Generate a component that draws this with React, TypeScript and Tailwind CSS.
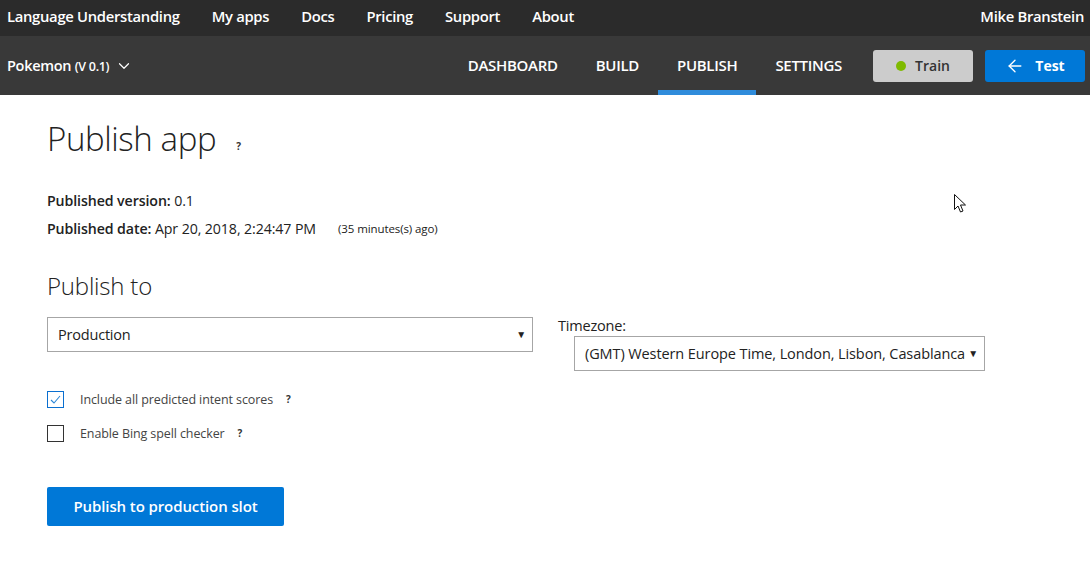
import { ArrowLeft, ChevronDown } from "lucide-react";

const font = { fontFamily: '"Open Sans", "Noto Sans", sans-serif' };

const topLinks = ["My apps", "Docs", "Pricing", "Support", "About"];
const tabs = ["DASHBOARD", "BUILD", "PUBLISH", "SETTINGS"];

const Help = () => (
  <span className="text-[10px] font-bold text-[#333]">?</span>
);

export default function App() {
  return (
    <div
      className="relative w-[1090px] h-[576px] overflow-hidden bg-white"
      style={font}
    >
      {/* Top bar */}
      <header className="h-[36px] bg-[#2b2b2b] flex items-center justify-between pl-[7px] pr-[6px] pb-[4px] text-white text-[14.8px] font-semibold tracking-[-0.3px]">
        <nav className="flex items-center gap-[32px]">
          <span>Language Understanding</span>
          {topLinks.map((l) => (
            <span key={l}>{l}</span>
          ))}
        </nav>
        <span>Mike Branstein</span>
      </header>

      {/* App bar */}
      <div className="h-[59px] bg-[#393939] flex items-stretch justify-between pl-[7px] pr-[5px] text-white">
        <div className="flex items-center gap-[6px] text-[14.5px] font-semibold tracking-[-0.3px]">
          <span>
            Pokemon <span className="text-[12.5px]">(V 0.1)</span>
          </span>
          <ChevronDown size={18} strokeWidth={1.6} />
        </div>
        <div className="flex items-stretch">
          {tabs.map((t) => (
            <div
              key={t}
              className={`flex items-center px-[19px] text-[15px] font-semibold tracking-[-0.3px] border-b-[5px] pt-[5px] ${
                t === "PUBLISH" ? "border-[#2f8cdb]" : "border-transparent"
              }`}
            >
              {t}
            </div>
          ))}
          <div className="flex items-center ml-[12px] gap-[12px]">
            <button className="w-[100px] h-[32px] rounded-[3px] bg-[#cccccc] text-[#333] flex items-center justify-center gap-[9px] text-[14px] font-semibold">
              <span className="w-[10px] h-[10px] rounded-full bg-[#7fba00]" />
              Train
            </button>
            <button className="w-[100px] h-[32px] rounded-[3px] bg-[#0078d7] text-white flex items-center justify-center gap-[10px] text-[14px] font-bold">
              <ArrowLeft size={20} strokeWidth={1.6} />
              Test
            </button>
          </div>
        </div>
      </div>

      {/* Content */}
      <main className="pl-[47px] pt-[21px] text-[#222]">
        <div className="flex items-center gap-[20px]">
          <h1 className="text-[33px] font-light tracking-[-0.4px] leading-[46px]">
            Publish app
          </h1>
          <span className="mt-[10px]">
            <Help />
          </span>
        </div>

        <div className="mt-[25px] text-[14.2px] leading-[28px] tracking-[-0.1px]">
          <div>
            <span className="font-semibold">Published version:</span> 0.1
          </div>
          <div className="flex items-center">
            <span>
              <span className="font-semibold">Published date:</span> Apr 20,
              2018, 2:24:47 PM
            </span>
            <span className="ml-[22px] text-[11.5px]">(35 minutes(s) ago)</span>
          </div>
        </div>

        <h2 className="mt-[26px] text-[24px] font-light leading-[34px] tracking-[-0.2px]">
          Publish to
        </h2>

        <div className="flex mt-[14px]">
          <div className="w-[486px]">
            <div className="h-[35px] border border-[#a6a6a6] flex items-center justify-between pl-[10px] pr-[6px] text-[14.5px] tracking-[-0.2px]">
              <span>Production</span>
              <span className="text-[10px]">▼</span>
            </div>

            <div className="mt-[38px] flex flex-col gap-[16px] text-[12.5px] leading-[17px] text-[#444] tracking-[-0.1px]">
              <label className="flex items-center">
                <span className="w-[17px] h-[17px] border border-[#0a6fd0] flex items-center justify-center">
                  <svg width="13" height="13" viewBox="0 0 13 13">
                    <path
                      d="M2 7 L5 10 L11 3"
                      fill="none"
                      stroke="#2b86d6"
                      strokeWidth="1.1"
                    />
                  </svg>
                </span>
                <span className="ml-[16px]">
                  Include all predicted intent scores
                </span>
                <span className="ml-[13px]">
                  <Help />
                </span>
              </label>
              <label className="flex items-center">
                <span className="w-[17px] h-[17px] border border-[#333]" />
                <span className="ml-[16px]">Enable Bing spell checker</span>
                <span className="ml-[13px]">
                  <Help />
                </span>
              </label>
            </div>

            <button className="mt-[45px] w-[237px] h-[39px] rounded-[2px] bg-[#0078d7] text-white text-[15px] font-semibold tracking-[-0.1px]">
              Publish to production slot
            </button>
          </div>

          <div className="ml-[25px]">
            <div className="text-[14.5px] leading-[18px] tracking-[-0.2px]">
              Timezone:
            </div>
            <div className="ml-[16px] mt-[1px] w-[411px] h-[35px] border border-[#a6a6a6] flex items-center justify-between pl-[10px] pr-[6px] text-[14.5px] tracking-[-0.1px]">
              <span>(GMT) Western Europe Time, London, Lisbon, Casablanca</span>
              <span className="text-[10px]">▼</span>
            </div>
          </div>
        </div>
      </main>

      {/* mouse cursor */}
      <svg
        className="absolute left-[954px] top-[194px]"
        width="13"
        height="20"
        viewBox="0 0 13 20"
      >
        <path
          d="M0.5 0.5 L0.5 15.5 L4 12 L6.5 18 L9 17 L6.5 11 L11.5 11 Z"
          fill="white"
          stroke="#111"
          strokeWidth="1"
        />
      </svg>
    </div>
  );
}
